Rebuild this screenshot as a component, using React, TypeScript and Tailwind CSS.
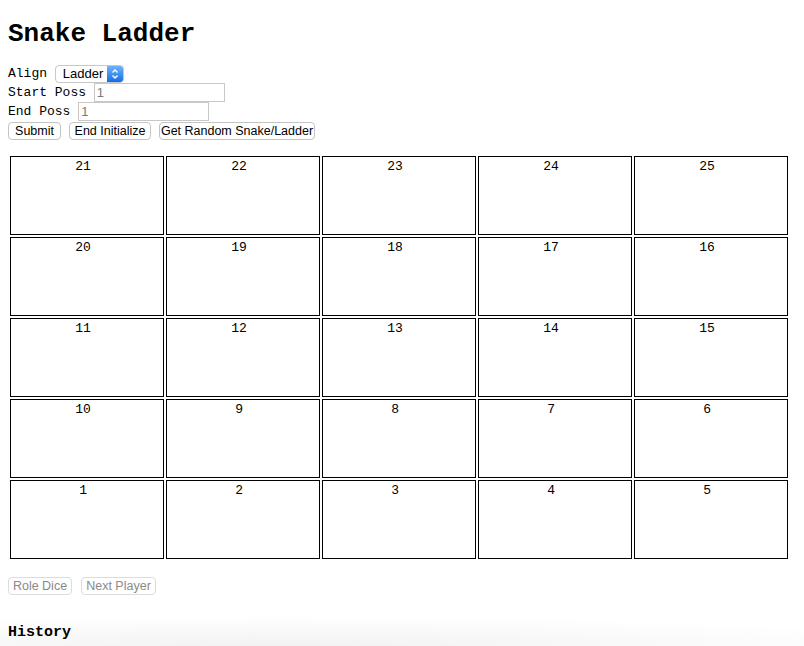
import React from 'react';

const rows: number[][] = [
  [21, 22, 23, 24, 25],
  [20, 19, 18, 17, 16],
  [11, 12, 13, 14, 15],
  [10, 9, 8, 7, 6],
  [1, 2, 3, 4, 5],
];

const sans = "font-['Liberation_Sans',Arial,sans-serif]";

const Btn: React.FC<{ label: string; w: string; disabled?: boolean }> = ({ label, w, disabled }) => (
  <span
    className={`inline-flex items-center justify-center whitespace-nowrap h-[18px] ${w} rounded-[4px] border bg-white text-[12.5px] leading-none ${sans} ${
      disabled ? 'border-[#dcdcdc] text-[#8a8a8a]' : 'border-[#c4c4c4] text-black'
    }`}
  >
    {label}
  </span>
);

const App: React.FC = () => {
  return (
    <div className="relative min-h-[646px] bg-white px-2 font-['Liberation_Mono','Courier_New',monospace] text-[13px] leading-[19px] text-black overflow-hidden">
      <h1 className="pt-[19px] text-[26px] leading-[30px] font-bold">Snake Ladder</h1>

      <div className="mt-[15px] flex flex-col">
        <div className="flex items-center h-[19px] whitespace-pre">
          <span>Align </span>
          <span className={`inline-flex h-[18px] w-[69px] items-stretch rounded-[4px] border border-[#c8c8c8] bg-white overflow-hidden ${sans}`}>
            <span className="flex-1 pl-[7px] text-[13px] leading-[16px]">Ladder</span>
            <span className="flex w-[16px] flex-col items-center justify-center bg-gradient-to-b from-[#6cb3fa] to-[#0a6fe6]">
              <svg width="8" height="12" viewBox="0 0 8 12" fill="none" stroke="white" strokeWidth="1.4">
                <path d="M1.5 4.5 L4 2 L6.5 4.5" />
                <path d="M1.5 7.5 L4 10 L6.5 7.5" />
              </svg>
            </span>
          </span>
        </div>
        <div className="flex items-center h-[19px] whitespace-pre">
          <span>Start Poss </span>
          <span className={`inline-flex h-[19px] w-[131px] items-center border border-[#c8c8c8] pl-[2px] text-[13px] text-[#7a7a7a] ${sans}`}>1</span>
        </div>
        <div className="flex items-center h-[19px] whitespace-pre">
          <span>End Poss </span>
          <span className={`inline-flex h-[19px] w-[131px] items-center border border-[#c8c8c8] pl-[2px] text-[13px] text-[#7a7a7a] ${sans}`}>1</span>
        </div>
        <div className="mt-[1px] flex items-center gap-[8px]">
          <Btn label="Submit" w="w-[53px]" />
          <Btn label="End Initialize" w="w-[82px]" />
          <Btn label="Get Random Snake/Ladder" w="w-[156px]" />
        </div>
      </div>

      <div className="mt-[14px] grid w-[782px] grid-cols-[repeat(5,154px)] gap-[2px] p-[2px]">
        {rows.flat().map((n) => (
          <div key={n} className="h-[79px] border border-black pt-[2px] text-center leading-[15px] whitespace-pre">
            {`${n} `}
          </div>
        ))}
      </div>

      <div className="mt-[16px] flex items-center gap-[9px]">
        <Btn label="Role Dice" w="w-[64px]" disabled />
        <Btn label="Next Player" w="w-[75px]" disabled />
      </div>

      <h3 className="mt-[29px] text-[15px] leading-[17px] font-bold">History</h3>

      {/* soft shade along the bottom edge */}
      <div className="pointer-events-none absolute inset-x-0 bottom-0 h-[40px] bg-[radial-gradient(110%_100%_at_35%_100%,rgba(0,0,0,0.05),rgba(0,0,0,0)_75%)]"></div>
    </div>
  );
};

export default App;
